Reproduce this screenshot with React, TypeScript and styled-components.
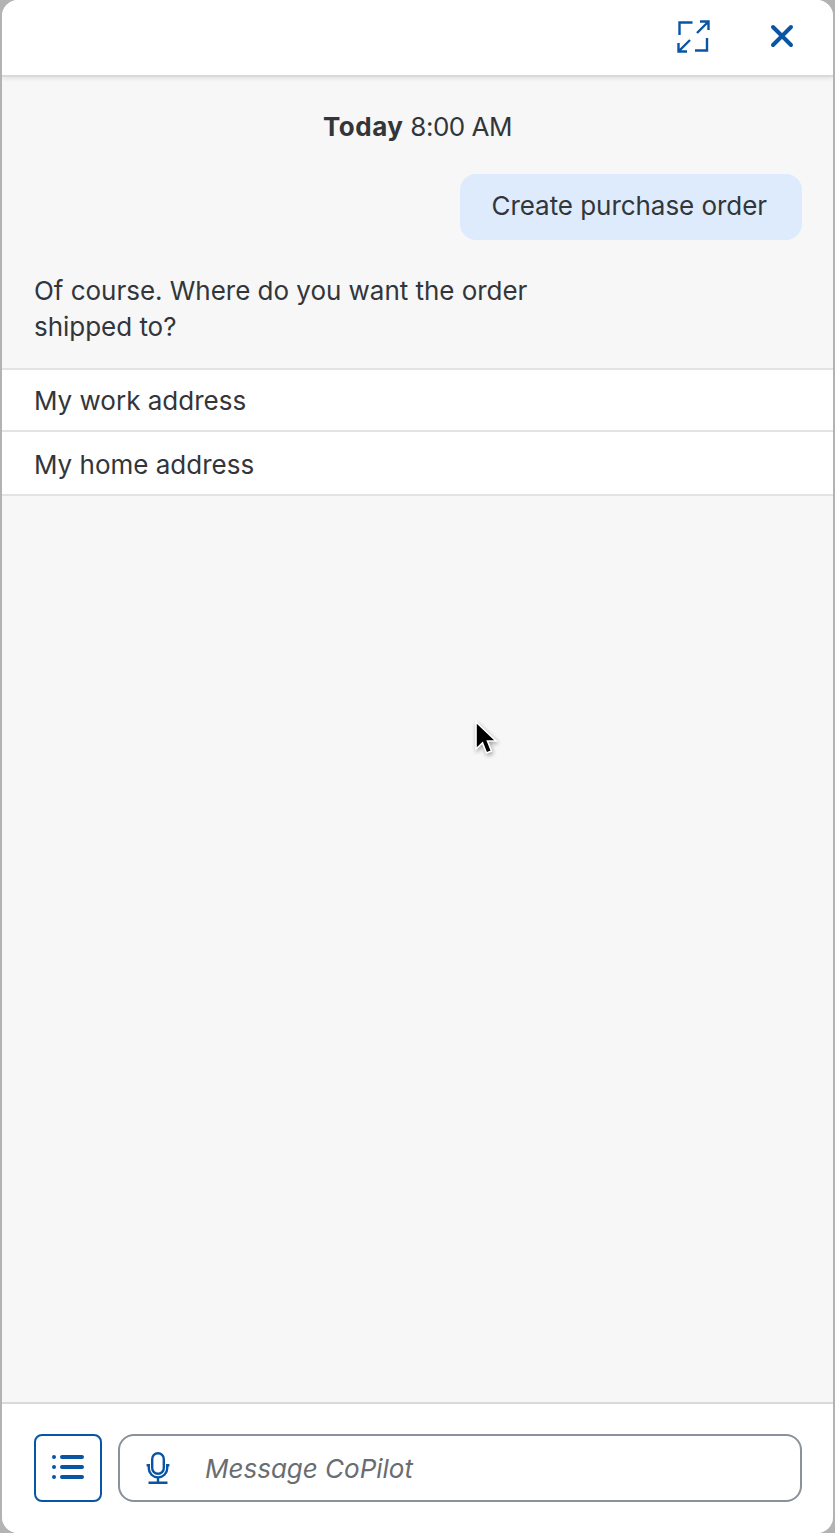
import React from "react";
import styled, { createGlobalStyle } from "styled-components";

const Global = createGlobalStyle`
  html, body { margin: 0; padding: 0; background: #fff; }
  #root { width: 835px; height: 1533px; }
  * { box-sizing: border-box; }
`;

const Frame = styled.div`
  position: relative;
  width: 835px;
  height: 1533px;
  background: #b3b3b3;
  padding: 0 2px;
  font-family: Inter, "Liberation Sans", sans-serif;
  font-size: 26px;
  color: #32363a;
`;

const Panel = styled.div`
  display: flex;
  flex-direction: column;
  height: 100%;
  background: #f7f7f7;
  border-radius: 16px;
  overflow: hidden;
`;

const Header = styled.header`
  flex: none;
  height: 77px;
  display: flex;
  align-items: center;
  justify-content: flex-end;
  background: #fff;
  border-bottom: 2px solid #d9d9d9;
  box-shadow: 0 2px 4px rgba(0, 0, 0, 0.08);
  padding: 0 39px 3px 0;
  gap: 60px;
  position: relative;
`;

const IconButton = styled.span`
  display: flex;
  color: #0a55a3;
`;

const Conversation = styled.main`
  flex: 1;
  display: flex;
  flex-direction: column;
`;

const Timestamp = styled.div`
  text-align: center;
  line-height: 36px;
  margin-top: 32px;
  letter-spacing: -0.5px;
  b {
    font-weight: 700;
    letter-spacing: 0.5px;
  }
`;

const UserRow = styled.div`
  display: flex;
  justify-content: flex-end;
  padding: 0 31px 0 0;
  margin-top: 29px;
`;

const Bubble = styled.div`
  height: 66px;
  padding: 0 35px 3px 31px;
  display: flex;
  align-items: center;
  border-radius: 16px;
  background: #deebfc;
  line-height: 36px;
  letter-spacing: -0.05px;
`;

const BotMessage = styled.p`
  margin: 33px 0 0;
  padding: 0 32px;
  width: 580px;
  line-height: 36px;
  letter-spacing: -0.03px;
`;

const OptionList = styled.ul`
  list-style: none;
  margin: 23px 0 0;
  padding: 0;
  border-top: 2px solid #e3e3e3;
`;

const Option = styled.li<{ $height: number; $nudge: number }>`
  height: ${(p) => p.$height}px;
  padding: ${(p) => p.$nudge}px 32px 0;
  display: flex;
  align-items: center;
  background: #fff;
  border-bottom: 2px solid #e3e3e3;
`;

const Footer = styled.footer`
  flex: none;
  height: 131px;
  display: flex;
  gap: 16px;
  padding: 30px 31px 0 32px;
  background: #fff;
  border-top: 2px solid #d9d9d9;
`;

const ListButton = styled.div`
  flex: none;
  width: 68px;
  height: 68px;
  display: flex;
  align-items: center;
  justify-content: center;
  color: #0a55a3;
  border: 2px solid #0a55a3;
  border-radius: 8px;
`;

const Input = styled.div`
  flex: 1;
  height: 68px;
  display: flex;
  align-items: center;
  gap: 35px;
  padding-left: 26px;
  border: 2px solid #89919a;
  border-radius: 16px;
  color: #0a55a3;
`;

const Placeholder = styled.span`
  color: #6a6d70;
  font-style: italic;
`;

const Cursor = styled.svg`
  position: absolute;
  left: 472px;
  top: 719px;
  filter: drop-shadow(1px 2px 2px rgba(0, 0, 0, 0.35));
`;

export default function App() {
  return (
    <Frame>
      <Global />
      <Panel>
        <Header>
          <IconButton>
            <svg width="33" height="33" viewBox="0 0 33 33" fill="none" stroke="currentColor" strokeWidth="2.4">
              <path d="M2.5 15V2.5h13" />
              <path d="M30 18v12.5H18" />
              <path d="M20 13 31 2M23 1.5h8.5V10" />
              <path d="M13 20 2 31M10 31.5H1.5V23" />
            </svg>
          </IconButton>
          <IconButton>
            <svg width="24" height="24" viewBox="0 0 24 24" fill="none" stroke="currentColor" strokeWidth="4" strokeLinecap="round">
              <path d="M3 3l18 18M21 3 3 21" />
            </svg>
          </IconButton>
        </Header>
        <Conversation>
          <Timestamp>
            <b>Today</b> 8:00 AM
          </Timestamp>
          <UserRow>
            <Bubble>Create purchase order</Bubble>
          </UserRow>
          <BotMessage>Of course. Where do you want the order shipped to?</BotMessage>
          <OptionList>
            <Option $height={62} $nudge={0}>My work address</Option>
            <Option $height={64} $nudge={2}>My home address</Option>
          </OptionList>
        </Conversation>
        <Footer>
          <ListButton>
            <svg width="34" height="26" viewBox="0 1 34 26" fill="currentColor">
              <circle cx="3" cy="3" r="2" />
              <circle cx="3" cy="13" r="2" />
              <circle cx="3" cy="23" r="2" />
              <rect x="9" y="1" width="24" height="4" rx="2" />
              <rect x="9" y="11" width="24" height="4" rx="2" />
              <rect x="9" y="21" width="24" height="4" rx="2" />
            </svg>
          </ListButton>
          <Input>
            <svg width="24" height="32" viewBox="0 0 24 32" fill="none" stroke="currentColor" strokeWidth="2.4">
              <rect x="6.2" y="1.2" width="11.6" height="20.6" rx="5.8" />
              <path d="M0.6 13.2h2.2v3.2a9.2 9 0 0 0 18.4 0v-3.2h2.2" />
              <path d="M12 25.4v5" />
              <path d="M2.5 30.8h19" />
            </svg>
            <Placeholder>Message CoPilot</Placeholder>
          </Input>
        </Footer>
      </Panel>
      <Cursor width="26" height="38" viewBox="0 0 26 38">
        <path d="M4 3v27l6.5-6 4 10 5-2-4-10h8.5z" fill="#000" stroke="#fff" strokeWidth="1.6" />
      </Cursor>
    </Frame>
  );
}
